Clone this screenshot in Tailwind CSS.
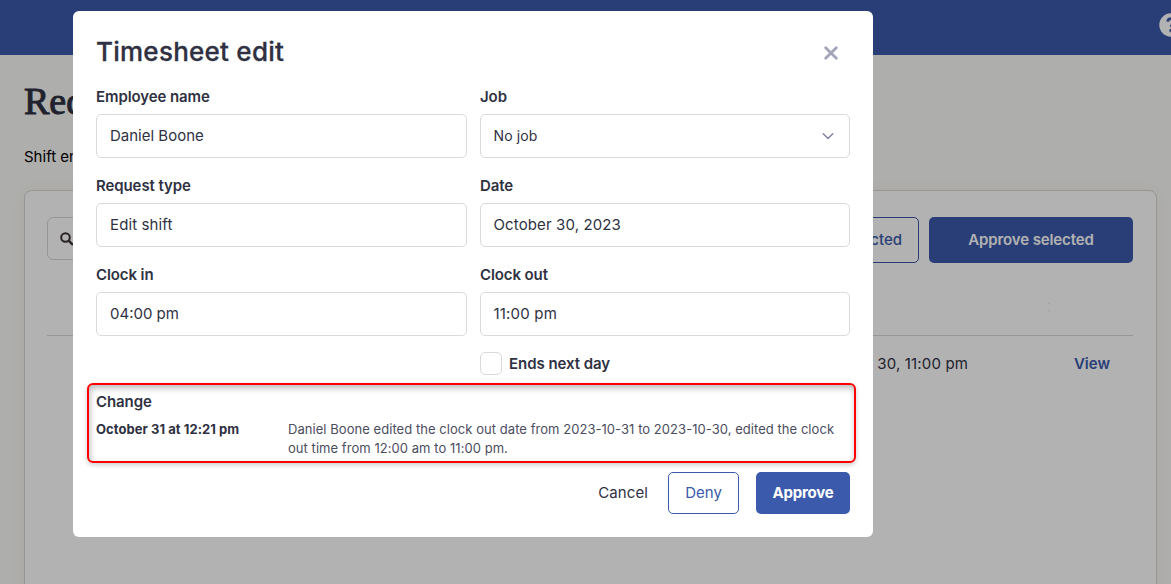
<!DOCTYPE html>
<html lang="en">
<head>
    <meta charset="UTF-8">
    <meta name="viewport" content="width=device-width, initial-scale=1.0">
    <title>Timesheet edit</title>
    <script src="https://cdn.jsdelivr.net/npm/@tailwindcss/browser@4"></script>
</head>
<body class="relative h-screen overflow-hidden bg-[#f9f9f6] font-['Inter',sans-serif] text-[15px] text-[#2f3142]">
    <!-- Page -->
    <header class="flex h-[55px] items-center justify-end bg-[#3b5aab] pb-1.5">
        <svg class="-mr-3 h-6 w-6 shrink-0" viewBox="0 0 24 24" fill="none">
            <circle cx="12" cy="12" r="11.7" fill="#fff"/>
            <path d="M8.6 8.600c.3-2 1.700-3 3.500-3 2 0 3.500 1.200 3.500 3 0 2.500-3.400 2.700-3.400 5.100" stroke="#3b5aab" stroke-width="2.800"/>
            <circle cx="12.100" cy="17.600" r="1.800" fill="#3b5aab"/>
        </svg>
    </header>
    <main class="px-6">
        <h1 class="mt-[23px] h-[46px] font-['Liberation_Serif',serif] text-[38px] leading-[46px] font-normal [-webkit-text-stroke:1px_#2f3142]">Requests</h1>
        <p class="mt-[23px] h-5 leading-5 text-black">Shift entries</p>
        <section class="mt-[23px] mr-[-10px] h-[420px] rounded-lg border border-[#dad6d5] bg-white pr-[23px] pl-[22px] pt-[26px] shadow-[0_0_12px_rgba(200,170,150,0.12)]">
            <div class="flex items-start gap-2.5">
                <div class="flex h-[43px] w-[250px] items-center rounded-md border border-[#dad6d5] pl-3">
                    <svg class="h-[14px] w-[14px]" viewBox="0 0 14 14" fill="none" stroke="#3d3036" stroke-width="2">
                        <circle cx="5.500" cy="5.500" r="4.300"/>
                        <path d="M8.600 8.600l4.400 4.400" stroke-width="2.400"/>
                    </svg>
                </div>
                <button class="ml-auto h-[46px] w-[170px] rounded-[5px] border border-[#3b5aab] pr-4 text-right font-medium text-[#3b5aab]">Deny selected</button>
                <button class="h-[46px] w-[204px] rounded-[5px] bg-[#3b5aab] font-semibold tracking-[-0.12px] text-white">Approve selected</button>
            </div>
            <div class="flex h-[73px] items-start justify-end border-b border-[#dad6d5] pt-[38px] pr-[81px]">
                <svg class="h-3 w-1.5" viewBox="0 0 6 12" fill="#ededed">
                    <path d="M1 3l2-2 2 2zM1 9h4l-2 2z"/>
                </svg>
            </div>
            <div class="flex h-14 items-center justify-end pr-[23px]">
                <span class="tracking-[0.15px]">October 30, 11:00 pm</span>
                <a class="w-[142px] text-right font-semibold text-[#3b5aab]">View</a>
            </div>
        </section>
    </main>

    <!-- Modal -->
    <div class="absolute inset-0 bg-black/30"></div>
    <div class="absolute top-[11px] left-[73px] h-[526px] w-[800px] rounded-md bg-white px-[23px] pt-[22px]">
        <div class="flex h-9 items-center justify-between pr-3">
            <h2 class="text-[26px] font-medium tracking-[0.25px] [-webkit-text-stroke:0.3px_#2f3142]">Timesheet edit</h2>
            <svg class="mt-1 h-[14px] w-[14px]" viewBox="0 0 14 14" fill="none" stroke="#a2a4b8" stroke-width="2.800" stroke-linecap="round">
                <path d="M1.700 1.700l10.600 10.600M12.300 1.700L1.700 12.300"/>
            </svg>
        </div>

        <div class="mt-[18px] grid grid-cols-[371px_370px] gap-x-[13px] gap-y-[18px]">
            <div>
                <label class="block h-5 leading-5 font-semibold tracking-[-0.1px]">Employee name</label>
                <div class="mt-[7px] flex h-11 items-center rounded-[5px] border border-[#ddd8db] px-[13px]">Daniel Boone</div>
            </div>
            <div>
                <label class="block h-5 leading-5 font-semibold tracking-[-0.1px]">Job</label>
                <div class="mt-[7px] flex h-11 items-center justify-between rounded-[5px] border border-[#ddd8db] pr-[15px] pl-[12.5px]">
                    <span class="text-sm tracking-[0.1px]">No job</span>
                    <svg class="h-3 w-3" viewBox="0 0 12 12" fill="none" stroke="#83859f" stroke-width="1.500" stroke-linecap="round" stroke-linejoin="round">
                        <path d="M1.200 3.700L6 8.500l4.800-4.800"/>
                    </svg>
                </div>
            </div>
            <div>
                <label class="block h-5 leading-5 font-semibold tracking-[-0.1px]">Request type</label>
                <div class="mt-[7px] flex h-11 items-center rounded-[5px] border border-[#ddd8db] px-[13px] tracking-[0.12px]">Edit shift</div>
            </div>
            <div>
                <label class="block h-5 leading-5 font-semibold tracking-[-0.1px]">Date</label>
                <div class="mt-[7px] flex h-11 items-center rounded-[5px] border border-[#ddd8db] px-[12.5px] tracking-[0.12px]">October 30, 2023</div>
            </div>
            <div>
                <label class="block h-5 leading-5 font-semibold tracking-[-0.1px]">Clock in</label>
                <div class="mt-[7px] flex h-11 items-center rounded-[5px] border border-[#ddd8db] px-[13px]">04:00 pm</div>
            </div>
            <div>
                <label class="block h-5 leading-5 font-semibold tracking-[-0.1px]">Clock out</label>
                <div class="mt-[7px] flex h-11 items-center rounded-[5px] border border-[#ddd8db] px-[12.5px] tracking-[0.2px]">11:00 pm</div>
                <div class="mt-4 flex h-[23px] items-center gap-[7px]">
                    <span class="h-[23px] w-[22px] rounded-[5px] border border-[#ddd8db]"></span>
                    <span class="pt-0.5 font-semibold tracking-[-0.05px]">Ends next day</span>
                </div>
            </div>
        </div>

        <h3 class="mt-[17px] h-5 leading-5 font-semibold tracking-[-0.1px]">Change</h3>
        <div class="mt-2 flex text-[13px] leading-[19px]">
            <span class="w-48 shrink-0 font-bold tracking-[0.05px]">October 31 at 12:21 pm</span>
            <p class="tracking-[0.05px] text-[#4b4d5e]">Daniel Boone edited the clock out date from 2023-10-31 to 2023-10-30, edited the clock<br>out time from 12:00 am to 11:00 pm.</p>
        </div>

        <div class="mt-3.5 flex items-center justify-end">
            <button class="mr-5 tracking-[0.1px]">Cancel</button>
            <button class="mr-[17px] h-[42px] w-[71px] rounded-[5px] border border-[#3b5aab] text-[#3b5aab]">Deny</button>
            <button class="h-[42px] w-[94px] rounded-[5px] bg-[#3b5aab] font-bold tracking-[-0.2px] text-white">Approve</button>
        </div>

        <!-- Highlight around the change entry -->
        <div class="absolute top-[372px] left-[14px] h-[80px] w-[769px] rounded-[6px] border-2 border-[#ff0000] shadow-[0_2px_5px_rgba(0,0,0,0.2),inset_1px_3px_6px_rgba(0,0,0,0.28)]"></div>
    </div>
</body>
</html>
